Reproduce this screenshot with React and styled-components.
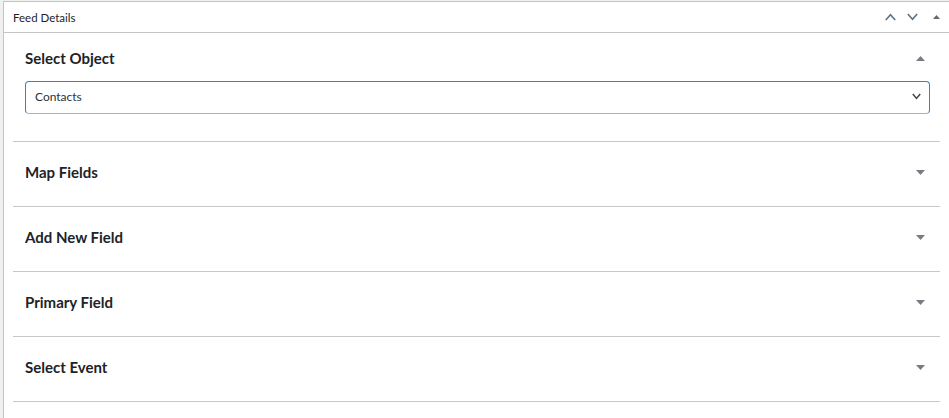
import React from "react";
import styled, { createGlobalStyle } from "styled-components";

const Global = createGlobalStyle`
  html, body { margin: 0; padding: 0; background: #f0f0f1; overflow: hidden; }
  body { font-family: Lato, "Noto Sans", sans-serif; color: #1d2327; }
`;

const Page = styled.div`
  padding: 1px 0 0 3px;
  min-height: 417px;
`;

const Panel = styled.section`
  background: #fff;
  border: 1px solid #c3c4c7;
  border-right: none;
  min-height: 420px;
`;

const PanelHeader = styled.header`
  display: flex;
  align-items: center;
  height: 30px;
  padding: 0 0 0 9px;
  border-bottom: 1px solid #c3c4c7;
`;

const PanelTitle = styled.h2`
  flex: 1;
  margin: 0;
  font-size: 11.5px;
  font-weight: 400;
  color: #1d2327;
`;

const HeaderButtons = styled.div`
  display: flex;
  align-items: center;
`;

const IconButton = styled.button`
  display: flex;
  align-items: center;
  justify-content: center;
  width: ${(p) => p.$w || 22}px;
  height: 30px;
  padding: 0;
  border: 0;
  background: none;
  cursor: pointer;
`;

const Body = styled.div`
  padding: 0 9px;
`;

const Section = styled.div`
  border-bottom: 1px solid #c8c8c8;
  padding-bottom: ${(p) => (p.$open ? 27 : 0)}px;
`;

const SectionHead = styled.div`
  display: flex;
  align-items: center;
  padding: ${(p) => (p.$open ? "16px 15px 14px 12px" : "21px 15px 25px 12px")};
`;

const SectionTitle = styled.h3`
  flex: 1;
  margin: 0;
  font-size: 15px;
  font-weight: 700;
  line-height: 18px;
  color: #1d2327;
`;

const SelectWrap = styled.div`
  margin: 0 10px 0 12px;
`;

const SelectBox = styled.div`
  display: flex;
  align-items: center;
  box-sizing: border-box;
  height: 33px;
  padding: 0 8px 2px 9px;
  border: 1px solid #3582c4;
  border-bottom-color: #a9b4bf;
  border-radius: 4px;
  font-size: 12px;
  color: #2c3338;
`;

const SelectValue = styled.span`
  flex: 1;
`;

const Triangle = ({ up, w = 9, h = 5, color = "#787c82" }) => (
  <svg width={w} height={h} viewBox={`0 0 ${w} ${h}`}>
    {up ? (
      <polygon points={`0,${h} ${w},${h} ${w / 2},0`} fill={color} />
    ) : (
      <polygon points={`0,0 ${w},0 ${w / 2},${h}`} fill={color} />
    )}
  </svg>
);

const Chevron = ({ up, w = 11, h = 6, color = "#5f7284", sw = 1.6 }) => (
  <svg width={w} height={h + 2} viewBox={`0 -1 ${w} ${h + 2}`}>
    <polyline
      points={up ? `0.8,${h} ${w / 2},0.6 ${w - 0.8},${h}` : `0.8,0 ${w / 2},${h - 0.6} ${w - 0.8},0`}
      fill="none"
      stroke={color}
      strokeWidth={sw}
    />
  </svg>
);

const sections = ["Map Fields", "Add New Field", "Primary Field", "Select Event"];

export default function App() {
  return (
    <>
      <Global />
      <Page>
        <Panel>
          <PanelHeader>
            <PanelTitle>Feed Details</PanelTitle>
            <HeaderButtons>
              <IconButton aria-label="Move up">
                <Chevron up />
              </IconButton>
              <IconButton aria-label="Move down">
                <Chevron />
              </IconButton>
              <IconButton $w={26} aria-label="Toggle panel">
                <Triangle up w={7} h={4} color="#646970" />
              </IconButton>
            </HeaderButtons>
          </PanelHeader>
          <Body>
            <Section $open>
              <SectionHead $open>
                <SectionTitle>Select Object</SectionTitle>
                <Triangle up />
              </SectionHead>
              <SelectWrap>
                <SelectBox>
                  <SelectValue>Contacts</SelectValue>
                  <Chevron w={9} h={5} color="#3c434a" sw={1.5} />
                </SelectBox>
              </SelectWrap>
            </Section>
            {sections.map((s) => (
              <Section key={s}>
                <SectionHead>
                  <SectionTitle>{s}</SectionTitle>
                  <Triangle />
                </SectionHead>
              </Section>
            ))}
          </Body>
        </Panel>
      </Page>
    </>
  );
}
